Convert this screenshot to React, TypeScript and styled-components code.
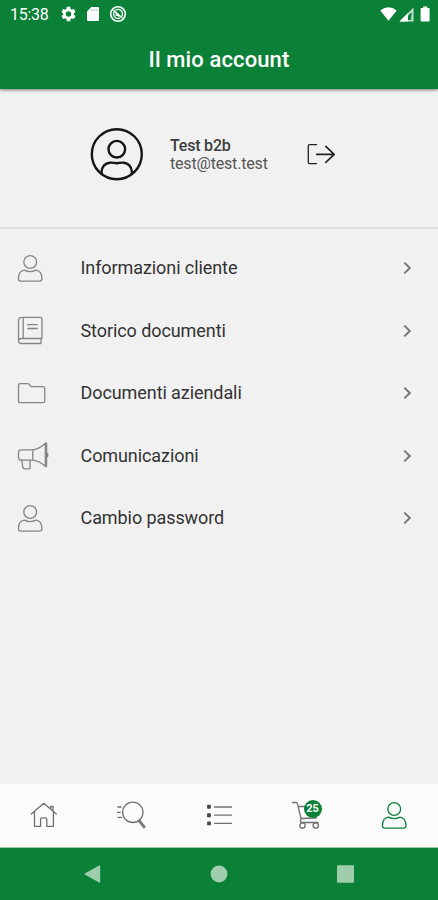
import React from "react";
import styled, { createGlobalStyle } from "styled-components";

const GREEN = "#0b8138";

const GlobalStyle = createGlobalStyle`
  * { box-sizing: border-box; }
  body { margin: 0; background: #f1f1f1; }
`;

const Screen = styled.div`
  width: 438px;
  height: 900px;
  display: flex;
  flex-direction: column;
  overflow: hidden;
  background: #f1f1f1;
  color: #333;
  font-family: Roboto, sans-serif;
`;

const Header = styled.header`
  flex: 0 0 89px;
  background: ${GREEN};
  color: #fff;
  box-shadow: 0 1px 3px rgba(0, 0, 0, 0.5);
`;

const StatusBar = styled.div`
  height: 28px;
  display: flex;
  align-items: center;
  padding: 0 2px 0 10px;
`;

const Clock = styled.span`
  width: 51px;
  font-size: 16px;
  line-height: 28px;
  letter-spacing: -0.25px;
  padding-top: 1px;
`;

const StatusGroup = styled.div<{ $gap: number; $end?: boolean }>`
  display: flex;
  align-items: center;
  gap: ${(p) => p.$gap}px;
  margin-left: ${(p) => (p.$end ? "auto" : "0")};
`;

const Title = styled.h1`
  margin: 0;
  height: 61px;
  line-height: 63px;
  text-align: center;
  font-size: 22px;
  font-weight: 500;
  letter-spacing: 0.12px;
`;

const Profile = styled.section`
  flex: 0 0 140px;
  display: flex;
  align-items: flex-start;
  padding: 38px 0 0 90px;
  border-bottom: 2px solid #dfdfdf;
`;

const Identity = styled.div`
  width: 137px;
  margin: 10px 0 0 27px;
  font-size: 16px;
  line-height: 18px;
`;

const UserName = styled.div`
  font-weight: 500;
  letter-spacing: -0.2px;
  color: #3c3c3c;
`;

const Email = styled.div`
  letter-spacing: -0.18px;
  color: #555;
`;

const LogoutButton = styled.button`
  display: flex;
  margin: 16px 0 0;
  padding: 0;
  border: 0;
  background: none;
`;

const Menu = styled.ul`
  flex: 1;
  margin: 0;
  padding: 8px 24px 0 17px;
  list-style: none;
`;

const MenuRow = styled.li`
  height: 62.5px;
  display: grid;
  grid-template-columns: 63.5px 1fr 12px;
  align-items: center;
`;

const MenuLabel = styled.span`
  font-size: 18px;
  line-height: 24px;
  letter-spacing: -0.08px;
`;

const TabBar = styled.nav`
  flex: 0 0 64px;
  display: grid;
  grid-template-columns: repeat(5, 1fr);
  padding-bottom: 2px;
  background: #fbfbfb;
  border-top: 1px solid #f7f7f7;
  border-bottom: 1px solid #9bcaa9;
`;

const Tab = styled.a<{ $active?: boolean }>`
  display: flex;
  align-items: center;
  justify-content: center;
  color: ${(p) => (p.$active ? GREEN : "#707070")};
`;

const CartBox = styled.span`
  position: relative;
  display: flex;
`;

const Badge = styled.span`
  position: absolute;
  left: 12.5px;
  top: -1px;
  width: 18px;
  height: 18px;
  border-radius: 50%;
  background: ${GREEN};
  color: #fff;
  font-size: 11px;
  font-weight: 700;
  line-height: 18px;
  text-align: center;
`;

const SystemBar = styled.footer`
  flex: 0 0 52px;
  display: flex;
  align-items: center;
  justify-content: center;
  gap: 108.5px;
  background: ${GREEN};
  color: #9fceac;
`;

const Icon = styled.svg`
  display: block;
  fill: none;
  stroke: currentColor;
  stroke-width: 1.3;
  stroke-linecap: round;
  stroke-linejoin: round;
`;

const RowIcon = styled(Icon)`
  color: #858585;
`;

const ChevronIcon = styled(Icon)`
  color: #777;
  stroke-width: 2;
  stroke-linecap: butt;
  stroke-linejoin: miter;
`;

const Solid = styled.svg`
  display: block;
  fill: currentColor;
`;

const PersonShape = () => (
  <>
    <circle cx="13.2" cy="8" r="6.4" />
    <path d="M7.4 16.2C3.4 16.8 1.5 20 1.4 24.6Q1.4 27.2 4 27.2H22.4Q25 27.2 25 24.6C24.9 20 23 16.8 19 16.2Q13.2 19.2 7.4 16.2Z" />
  </>
);

const PersonIcon = () => (
  <RowIcon width="26" height="29" viewBox="0 0 26 29">
    <PersonShape />
  </RowIcon>
);

const BookIcon = () => (
  <RowIcon width="26" height="29" viewBox="0 0 26 29">
    <path d="M5 1.3H23Q25 1.3 25 3V22.5H4.5Q1.5 22.8 1.5 25V5Q1.5 1.3 5 1.3ZM6.2 1.5V22.3M1.5 25Q1.7 27.5 4.5 27.5H24V22.7M10.8 8.7H20.2M10.8 12.5H20.2" />
  </RowIcon>
);

const FolderIcon = () => (
  <RowIcon width="29" height="23" viewBox="0 0 29 23">
    <path d="M3.2 1.7H10.5Q11.7 1.7 12.6 2.9L14.2 4.7H26Q27.8 4.7 27.8 6.5V19Q27.8 20.7 26 20.7H3.2Q1.5 20.7 1.5 19V3.4Q1.5 1.7 3.2 1.7Z" />
  </RowIcon>
);

const MegaphoneIcon = () => (
  <RowIcon width="32" height="30" viewBox="0 0 32 30">
    <path d="M15.8 8.8H4.4Q1.5 8.8 1.5 11.6V16.2Q1.5 19.2 4.4 19.2H15.8ZM15.8 8.8Q23 7.8 28.3 2.2V25.3Q23 20.3 15.8 19.2M28.3 2.2Q29.6 1.4 29.6 3V24.6Q29.6 26.3 28.3 25.3M30.7 12.5V15.5M4.9 19.3L5.6 25.5Q5.8 27.8 8 27.8H11.2Q13.6 27.8 13.3 25.5L13 23.5V19.3" />
  </RowIcon>
);

const Chevron = () => (
  <ChevronIcon width="12" height="14" viewBox="0 0 12 14">
    <path d="M2.3 1.6L7.8 7L2.3 12.4" />
  </ChevronIcon>
);

const menuItems = [
  { label: "Informazioni cliente", icon: PersonIcon },
  { label: "Storico documenti", icon: BookIcon },
  { label: "Documenti aziendali", icon: FolderIcon },
  { label: "Comunicazioni", icon: MegaphoneIcon },
  { label: "Cambio password", icon: PersonIcon },
];

export default function App() {
  return (
    <>
      <GlobalStyle />
      <Screen>
        <Header>
          <StatusBar>
            <Clock>15:38</Clock>
            <StatusGroup $gap={9}>
              <Solid width="15" height="16" viewBox="2 2 20 20">
                <path d="M19.14 12.94c.04-.3.06-.61.06-.94s-.02-.64-.07-.94l2.03-1.58a.49.49 0 0 0 .12-.61l-1.92-3.32a.49.49 0 0 0-.59-.22l-2.39.96a7 7 0 0 0-1.62-.94L14.4 2.8a.48.48 0 0 0-.48-.4h-3.84a.48.48 0 0 0-.47.4l-.36 2.55a7 7 0 0 0-1.62.94l-2.39-.96a.48.48 0 0 0-.59.22L2.74 8.87a.47.47 0 0 0 .12.61l2.03 1.58a7 7 0 0 0 0 1.88l-2.03 1.58a.49.49 0 0 0-.12.61l1.92 3.32c.12.22.37.29.59.22l2.39-.96c.5.38 1.03.7 1.62.94l.36 2.55c.05.24.24.4.48.4h3.84c.24 0 .44-.16.47-.4l.36-2.55a7 7 0 0 0 1.62-.94l2.39.96c.22.08.47 0 .59-.22l1.92-3.32a.47.47 0 0 0-.12-.61ZM12 15.6a3.6 3.6 0 1 1 0-7.2 3.6 3.6 0 0 1 0 7.2Z" />
              </Solid>
              <Solid width="15" height="16" viewBox="0 0 15 16">
                <path d="M6.3 1H13Q14 1 14 2V14Q14 15 13 15H3Q2 15 2 14V5.4Z" />
                <path d="M6 4.2H7.3M8.4 4.2H9.7M10.8 4.2H12.1" stroke={GREEN} strokeWidth="1.8" opacity=".35" />
              </Solid>
              <Icon width="18" height="18" viewBox="0 0 18 18">
                <circle cx="9" cy="9" r="7.3" strokeWidth="1.6" />
                <path d="M5 7.3A4.5 4.5 0 0 0 10.7 13.2M6.8 5A4.5 4.5 0 0 1 13.1 10.8M4.8 5.4L13 12.8M7.3 7.3V10.2L10.3 11" />
              </Icon>
            </StatusGroup>
            <StatusGroup $gap={2} $end>
              <Solid width="17" height="14" viewBox="0 0 17 14">
                <path d="M0.3 3.4Q8.5-3 16.7 3.4L8.5 13.8Z" />
              </Solid>
              <Solid width="15" height="15" viewBox="0 0 15 15">
                <path fillRule="evenodd" d="M14.5 0.5V14.5H0.5ZM12.3 5.7L8.8 9.2V12.8H12.3Z" opacity=".75" />
                <path d="M8.8 6.2V14.5H0.5Z" />
                <path d="M9 9L12.4 5.6V8.3L10.8 10.3V13H9Z" fill={GREEN} />
              </Solid>
              <Solid width="20" height="16" viewBox="1 0 20 16">
                <path d="M6.5 2H8.2V0.5H12.2V2H13.6Q14.6 2 14.6 3V14.5Q14.6 15.5 13.6 15.5H6.6Q5.6 15.5 5.6 14.5V3Q5.6 2 6.5 2Z" />
              </Solid>
            </StatusGroup>
          </StatusBar>
          <Title>Il mio account</Title>
        </Header>

        <Profile>
          <Icon width="53" height="54" viewBox="0 0 53 54" color="#151515">
            <g strokeWidth="2.4">
              <circle cx="26.8" cy="27.2" r="25" />
              <circle cx="26.8" cy="22.2" r="8.3" />
              <path d="M11.6 46.7V44.2Q12.6 36.7 19.7 35.7Q23.2 35.5 26.8 36.2Q30.3 35.5 33.8 35.7Q40.8 36.7 41.8 44.2V46.7" />
            </g>
          </Icon>
          <Identity>
            <UserName>Test b2b</UserName>
            <Email>test@test.test</Email>
          </Identity>
          <LogoutButton aria-label="Esci">
            <Icon width="28" height="22" viewBox="0 0 28 22" color="#222">
              <path d="M9.5 1.7H2.7Q1.3 1.7 1.3 3.1V19.2Q1.3 20.6 2.7 20.6H9.5" />
              <path d="M9.7 11.4H27M18.8 3.4L27.2 11.4L18.8 19.4" strokeWidth="1.6" />
            </Icon>
          </LogoutButton>
        </Profile>

        <Menu>
          {menuItems.map(({ label, icon: Glyph }) => (
            <MenuRow key={label}>
              <Glyph />
              <MenuLabel>{label}</MenuLabel>
              <Chevron />
            </MenuRow>
          ))}
        </Menu>

        <TabBar>
          <Tab aria-label="Home">
            <Icon width="27" height="26" viewBox="0 0 27 26">
              <path d="M1.3 12L13.8 1.2L26.3 12M4.5 9.5V24.3H10.6V17Q10.6 15.8 11.8 15.8H15.5Q16.8 15.8 16.8 17V24.3H23.4V9.5M20.6 6.5V4.5H23V9" />
            </Icon>
          </Tab>
          <Tab aria-label="Cerca">
            <Icon width="30" height="28" viewBox="0 0 30 28">
              <circle cx="16.8" cy="11.3" r="10.2" />
              <path d="M22.5 20L28 26.8L29 25.9L23.6 19M2 6H5.2M1.5 11.3H4.2M2 16.3H5.7" />
            </Icon>
          </Tab>
          <Tab aria-label="Catalogo">
            <Icon width="26" height="22" viewBox="0 0 26 22">
              <path d="M8.5 3H25.5M8.5 11.2H25.5M8.5 19.4H25.5" />
              <path d="M1.8 1.5H4.2V4H1.8ZM1.8 10H4.2V12.5H1.8ZM1.8 18.2H4.2V20.7H1.8Z" fill="currentColor" color="#444" />
            </Icon>
          </Tab>
          <Tab aria-label="Carrello">
            <CartBox>
              <Icon width="31" height="29" viewBox="0 0 31 29">
                <path d="M1.5 1.5H5Q6.2 1.5 6.5 2.8L10 17.5Q8.5 21.5 11 21.5H27M7.5 5.5H26L25 17L10 17.5" />
                <circle cx="11.5" cy="24.5" r="2.7" />
                <circle cx="24.8" cy="24.5" r="2.7" />
              </Icon>
              <Badge>25</Badge>
            </CartBox>
          </Tab>
          <Tab aria-label="Account" $active>
            <Icon width="26" height="29" viewBox="0 0 26 29">
              <PersonShape />
            </Icon>
          </Tab>
        </TabBar>

        <SystemBar>
          <Solid width="18" height="18" viewBox="0 0 18 18">
            <path d="M15.2 0.5Q16.2 0 16.2 1.2V16.8Q16.2 18 15.2 17.5L0.8 9.6Q0 9 0.8 8.4Z" />
          </Solid>
          <Solid width="18" height="18" viewBox="0 0 18 18">
            <circle cx="9" cy="9" r="8.4" />
          </Solid>
          <Solid width="18" height="18" viewBox="0 0 18 18">
            <rect x="0" y=".3" width="17" height="17.4" rx="1.2" />
          </Solid>
        </SystemBar>
      </Screen>
    </>
  );
}
